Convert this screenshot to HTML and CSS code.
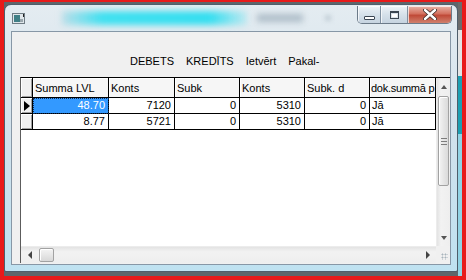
FILE: index.html
```html
<!DOCTYPE html>
<html lang="lv">
<head>
  <meta charset="UTF-8">
  <title>Grāmatojumi</title>
  <link rel="stylesheet" href="styles.css">
</head>
<body>
  <div class="desk">
    <div class="window">
      <div class="titlebar">
        <svg class="app-icon" width="13" height="11" viewBox="0 0 13 11">
          <rect x="0.5" y="0.5" width="12" height="10" fill="#dfe6ea" stroke="#6f7c84"/>
          <rect x="2" y="2" width="6" height="7" fill="#3f7f86"/>
          <rect x="8" y="6" width="3" height="3" fill="#9aa7ad"/>
          <rect x="11" y="1" width="1" height="3" fill="#222"/>
        </svg>
        <div class="title-blur">
          <span class="blur-glow"></span>
          <span class="blur-word"></span>
          <span class="blur-dot"></span>
        </div>
        <div class="caption-btns">
          <div class="cbtn min"><span class="min-glyph"></span></div>
          <div class="cbtn max"><span class="max-glyph"></span></div>
          <div class="cbtn close">
            <svg width="14" height="11" viewBox="0 0 14 11">
              <path d="M2 1 L12 10 M12 1 L2 10" stroke="#3a2a28" stroke-width="4" stroke-linecap="round"/>
              <path d="M2 1 L12 10 M12 1 L2 10" stroke="#fff" stroke-width="2.4" stroke-linecap="round"/>
            </svg>
          </div>
        </div>
      </div>

      <div class="client">
        <div class="toolbar">
          <span>DEBETS</span>
          <span>KREDĪTS</span>
          <span>Ietvērt</span>
          <span>Pakal-</span>
        </div>

        <div class="grid">
          <div class="sheet">
            <div class="row head">
              <div class="cell ind"></div>
              <div class="cell">Summa LVL</div>
              <div class="cell">Konts</div>
              <div class="cell">Subk</div>
              <div class="cell">Konts</div>
              <div class="cell">Subk. d</div>
              <div class="cell tight">dok.summā p</div>
            </div>
            <div class="row">
              <div class="cell ind"><span class="pointer"></span></div>
              <div class="cell num sel">48.70</div>
              <div class="cell num">7120</div>
              <div class="cell num">0</div>
              <div class="cell num">5310</div>
              <div class="cell num">0</div>
              <div class="cell">Jā</div>
            </div>
            <div class="row">
              <div class="cell ind"></div>
              <div class="cell num">8.77</div>
              <div class="cell num">5721</div>
              <div class="cell num">0</div>
              <div class="cell num">5310</div>
              <div class="cell num">0</div>
              <div class="cell">Jā</div>
            </div>
          </div>

          <div class="vscroll">
            <div class="arrow-btn"><span class="tri up"></span></div>
            <div class="vtrack">
              <div class="vthumb"><span class="grip"></span></div>
            </div>
            <div class="arrow-btn"><span class="tri down"></span></div>
          </div>

          <div class="hscroll">
            <div class="arrow-btn"><span class="tri left"></span></div>
            <div class="htrack">
              <div class="hthumb"></div>
            </div>
            <div class="arrow-btn"><span class="tri right"></span></div>
          </div>

          <div class="corner"><span class="size-grip"></span></div>
        </div>
      </div>
    </div>
    <div class="behind"></div>
  </div>
</body>
</html>
```

FILE: styles.css
```css
html {
  background:#e81a1a;
}

body {
  margin:0;
  width:466px;
  height:280px;
  box-sizing:border-box;
  padding:2px 4px 4px 4px;
  background:#e81a1a;
  font-family:"Liberation Sans", Arial, sans-serif;
  font-size:11px;
  color:#000;
  overflow:hidden;
}

.desk {
  display:flex;
  height:100%;
  background:#5f666b;
}

.window {
  width:454px;
  margin:2px 0 4px;
  box-sizing:border-box;
  border:1px solid #4f5e6b;
  border-radius:7px 7px 2px 2px;
  background:linear-gradient(#e4ecf1, #d3e2ec 45%, #bfe2f1);
  display:flex;
  flex-direction:column;
}

.behind {
  flex:1;
  background:linear-gradient(#6c6c6c 0 28px, #e4e4e4 28px 74px, #1d9fb2 74px 132px, #92d3e4 132px);
}

/* title bar */

.titlebar {
  height:26px;
  display:flex;
  align-items:flex-start;
}

.app-icon {
  margin:8px 0 0 7px;
}

.title-blur {
  display:flex;
  align-items:center;
  height:18px;
  margin:4px 0 0 37px;
}

.blur-glow {
  width:185px;
  height:14px;
  background:linear-gradient(to right, rgba(150,210,225,0.5), #3fe0f0 22%, #34def0 80%, rgba(60,224,240,0.2));
  filter:blur(3px);
}

.blur-word {
  width:46px;
  height:8px;
  margin-left:10px;
  background:#aebdc8;
  filter:blur(3px);
}

.blur-dot {
  width:6px;
  height:6px;
  margin-left:22px;
  background:#c3cfd8;
  filter:blur(2px);
}

.caption-btns {
  display:flex;
  margin:1px 5px 0 auto;
  border:1px solid #6c7b89;
  border-top:0;
  border-radius:0 0 5px 5px;
  overflow:hidden;
  height:17px;
}

.cbtn {
  display:flex;
  align-items:center;
  justify-content:center;
  background:linear-gradient(#eef3f7, #d6e1ea 50%, #c6d4e0);
  border-right:1px solid #8090a0;
  box-shadow:inset 1px 1px rgba(255,255,255,0.7);
}

.cbtn.min {
  width:22px;
}

.cbtn.max {
  width:26px;
}

.cbtn.close {
  width:43px;
  border-right:0;
  background:linear-gradient(#e8b4a8, #d4715f 45%, #c04a38 55%, #d0806c);
}

.min-glyph {
  width:9px;
  height:2px;
  margin-top:6px;
  border:1px solid #3b4652;
  border-radius:1px;
  background:#fff;
}

.max-glyph {
  width:7px;
  height:5px;
  border:1px solid #3b4652;
  border-top-width:2px;
  background:#fff;
  box-shadow:inset 0 0 0 1px #d9e2ea;
}

/* client area */

.client {
  flex:1;
  margin:0 6px 6px;
  border:1px solid #8797a6;
  background:#f0f0f0;
  display:flex;
  flex-direction:column;
}

.toolbar {
  height:45px;
  box-sizing:border-box;
  padding:23px 0 0 118px;
  display:flex;
  gap:12px;
  line-height:13px;
}

.grid {
  flex:1;
  margin:0 0 1px 8px;
  display:grid;
  grid-template-columns:1fr 14px;
  grid-template-rows:1fr 17px;
  border-top:1px solid #000;
  border-left:1px solid #5c5c5c;
  background:#fff;
  min-height:0;
}

.sheet {
  overflow:hidden;
  background:#fff;
}

.row {
  display:grid;
  grid-template-columns:12px 76px 66px 65px 65px 65px 66px;
}

.cell {
  height:16px;
  box-sizing:border-box;
  border-right:1px solid #000;
  border-bottom:1px solid #000;
  padding:0 3px 0 2px;
  line-height:15px;
  white-space:nowrap;
  overflow:hidden;
}

.num {
  text-align:right;
}

.head .cell {
  height:20px;
  padding-top:4px;
  line-height:13px;
  background:#f6f6f6;
  box-shadow:inset 1px 1px #fff;
}

.head .cell.tight {
  padding-left:1px;
  padding-right:0;
  letter-spacing:-0.25px;
}

.cell.ind,
.head .cell.ind {
  padding:0;
  background:#f0f0f0;
  box-shadow:inset 1px 1px #fff, inset -1px -1px #a0a0a0;
  display:flex;
  align-items:center;
  justify-content:center;
}

.pointer {
  width:0;
  height:0;
  border-left:6px solid #000;
  border-top:5px solid transparent;
  border-bottom:5px solid transparent;
  margin-left:1px;
}

.sel {
  background:#3399ff;
  color:#fff;
  outline:1px dotted #0b2a55;
  outline-offset:-1px;
}

/* scroll bars */

.vscroll {
  display:flex;
  flex-direction:column;
  background:linear-gradient(to right, #e3e3e3, #f2f2f2 30%, #eeeeee);
  border-left:1px solid #ececec;
}

.hscroll {
  display:flex;
  background:linear-gradient(#e3e3e3, #f2f2f2 30%, #eeeeee);
  border-top:1px solid #ececec;
}

.arrow-btn {
  flex:0 0 17px;
  display:flex;
  align-items:center;
  justify-content:center;
}

.vtrack {
  flex:1;
  padding:1px 1px 0;
}

.htrack {
  flex:1;
  padding:1px 0 1px 1px;
}

.vthumb {
  height:90px;
  box-sizing:border-box;
  border:1px solid #a2a2a2;
  border-radius:2px;
  background:linear-gradient(to right, #f4f4f4, #e6e6e6 50%, #dadada);
  box-shadow:inset 1px 1px #fff;
  display:flex;
  align-items:center;
  justify-content:center;
}

.hthumb {
  width:15px;
  height:100%;
  box-sizing:border-box;
  border:1px solid #a2a2a2;
  border-radius:2px;
  background:linear-gradient(#f4f4f4, #e6e6e6 50%, #d8d8d8);
  box-shadow:inset 1px 1px #fff;
}

.grip {
  width:6px;
  height:5px;
  border-top:1px solid #7c7c7c;
  border-bottom:1px solid #7c7c7c;
  background:linear-gradient(transparent 2px, #7c7c7c 2px 3px, transparent 3px);
}

.tri {
  width:0;
  height:0;
}

.tri.up {
  border-left:3px solid transparent;
  border-right:3px solid transparent;
  border-bottom:4px solid #555;
}

.tri.down {
  border-left:3px solid transparent;
  border-right:3px solid transparent;
  border-top:4px solid #555;
}

.tri.left {
  border-top:4px solid transparent;
  border-bottom:4px solid transparent;
  border-right:4px solid #444;
}

.tri.right {
  border-top:4px solid transparent;
  border-bottom:4px solid transparent;
  border-left:4px solid #444;
}

.corner {
  background:#f0f0f0;
  display:flex;
  align-items:flex-end;
  justify-content:flex-end;
}

.size-grip {
  width:7px;
  height:7px;
  margin:0 2px 3px 0;
  background:radial-gradient(circle, #a8b4bc 0.8px, transparent 1.2px) 0 0 / 3px 3px;
}
```
